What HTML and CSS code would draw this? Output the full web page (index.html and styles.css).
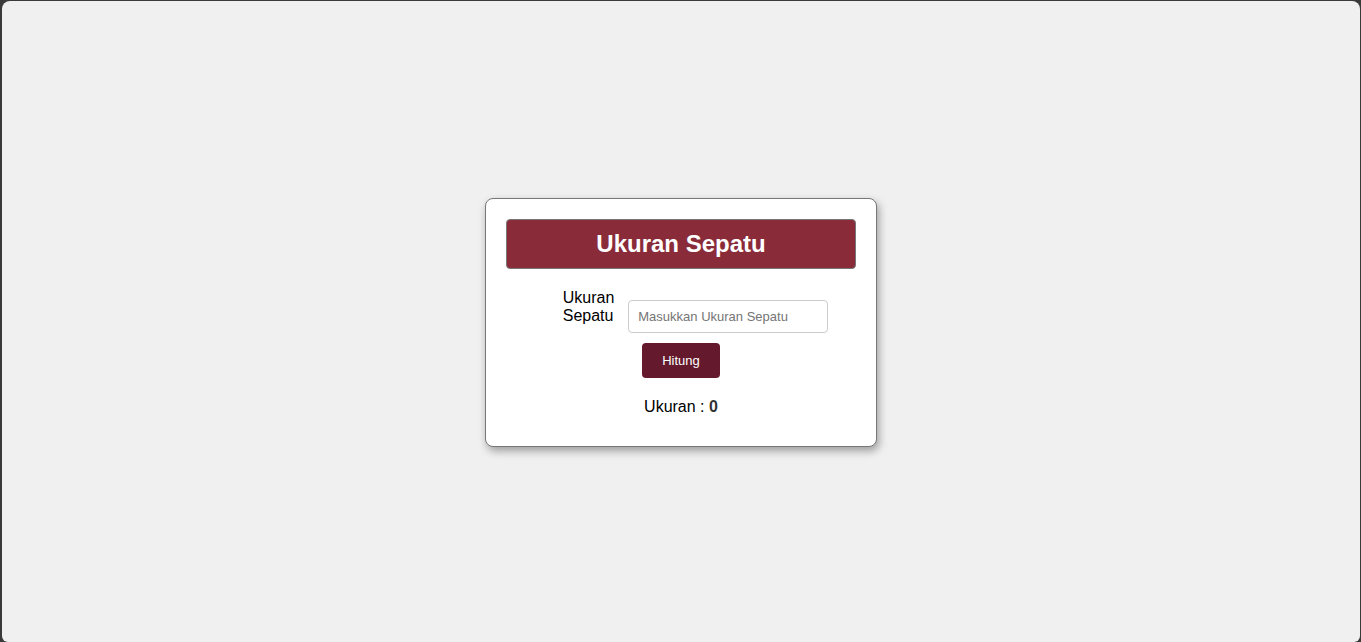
FILE: index.html
```html
<!DOCTYPE html>
<html lang="id">
<head>
<meta charset="utf-8">
<title>Ukuran Sepatu</title>
<link rel="stylesheet" href="styles.css">
</head>
<body>
<div class="screen">
  <div class="card">
    <h1 class="title">Ukuran Sepatu</h1>
    <div class="form-row">
      <label class="label" for="ukuran">Ukuran Sepatu</label><input class="input" id="ukuran" type="text" placeholder="Masukkan Ukuran Sepatu">
    </div>
    <div class="actions">
      <button class="btn" type="button">Hitung</button>
    </div>
    <p class="result">Ukuran : <b class="value">0</b></p>
  </div>
</div>
</body>
</html>
```

FILE: styles.css
```css
html {
  background: #3a3a3a;
  height: 100%;
}
body {
  margin: 0;
  height: 100%;
  padding: 1px 1px 0 2px;
  box-sizing: border-box;
  font-family: "Liberation Sans", Arial, sans-serif;
}
.screen {
  height: 100%;
  background: #f0f0f0;
  border-radius: 8px 8px 6px 6px;
  display: flex;
  align-items: center;
  justify-content: center;
}
.card {
  width: 350px;
  padding: 20px;
  margin-top: 2px;
  background: #fff;
  border: 1px solid #777;
  border-radius: 8px;
  box-shadow: 2px 4px 8px rgba(0, 0, 0, 0.35);
}
.title {
  margin: 0;
  height: 50px;
  box-sizing: border-box;
  background: #8a2b3a;
  border: 1px solid #777;
  border-radius: 4px;
  color: #fff;
  font-size: 24px;
  font-weight: bold;
  text-align: center;
  line-height: 48px;
}
.form-row {
  margin-top: 20px;
  text-align: center;
  font-size: 16px;
  line-height: 18px;
  padding-left: 29px;
}
.label {
  display: inline-block;
  width: min-content;
  text-align: left;
  color: #000;
  margin-right: 14px;
  vertical-align: baseline;
}
.input {
  display: inline-block;
  width: 200px;
  height: 33px;
  box-sizing: border-box;
  border: 1px solid #ccc;
  border-radius: 4px;
  padding: 0 9px;
  font-family: "Liberation Sans", Arial, sans-serif;
  font-size: 13px;
  vertical-align: baseline;
}
.input::placeholder {
  color: #757575;
}
.actions {
  margin-top: 10px;
  text-align: center;
}
.btn {
  width: 78px;
  height: 35px;
  background: #64192d;
  color: #fff;
  border: none;
  border-radius: 4px;
  font-family: "Liberation Sans", Arial, sans-serif;
  font-size: 13px;
  padding: 0;
}
.result {
  margin: 20px 0 10px;
  text-align: center;
  font-size: 16px;
  line-height: 18px;
  color: #000;
}
.value {
  color: #333;
}
```
